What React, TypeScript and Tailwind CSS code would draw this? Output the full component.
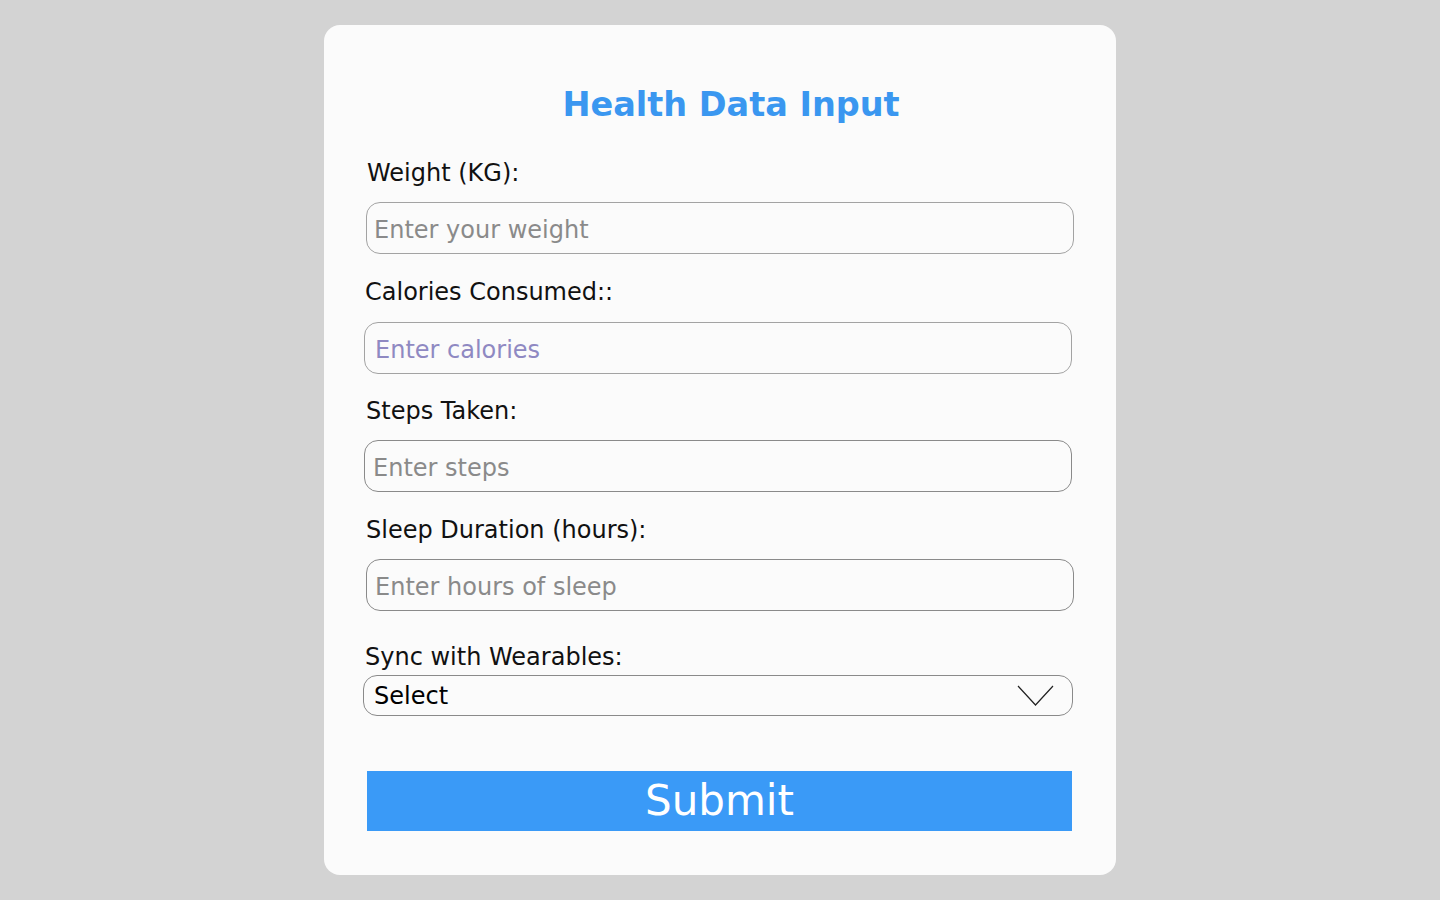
import { useState } from "react";

const font = { fontFamily: '"DejaVu Sans", "Open Sans", sans-serif' };

export default function App() {
  const [sync, setSync] = useState("");

  return (
    <div
      className="min-h-[900px] w-full bg-[#d3d3d3] flex justify-center pt-[25px]"
      style={font}
    >
      <div className="w-[792px] h-[850px] bg-[#fbfbfb] rounded-[16px] flex flex-col pt-[60px] pl-[40px] pr-[42px]">
        <h1 className="text-[33.5px] leading-[40px] font-bold text-[#3a97f0] text-center pl-[24px]">
          Health Data Input
        </h1>

        <label className="mt-[33px] ml-[3px] text-[24px] leading-[30px] text-[#111]">
          Weight (KG):
        </label>
        <input
          placeholder="Enter your weight"
          className="mt-[14px] ml-[2px] w-[708px] h-[52px] border border-[#a3a3a3] rounded-[14px] px-[7px] pt-[4px] text-[24px] bg-transparent outline-none placeholder:text-[#8a8a8a]"
        />

        <label className="mt-[23px] ml-[1px] text-[24px] leading-[30px] text-[#111]">
          Calories Consumed::
        </label>
        <input
          placeholder="Enter calories"
          className="mt-[15px] w-[708px] h-[52px] border border-[#a3a3a3] rounded-[14px] px-[10px] pt-[4px] text-[24px] bg-transparent outline-none placeholder:text-[#8f89c2]"
        />

        <label className="mt-[22px] ml-[2px] text-[24px] leading-[30px] text-[#111]">
          Steps Taken:
        </label>
        <input
          placeholder="Enter steps"
          className="mt-[14px] w-[708px] h-[52px] border border-[#8a8a8a] rounded-[14px] px-[8px] pt-[4px] text-[24px] bg-transparent outline-none placeholder:text-[#8a8a8a]"
        />

        <label className="mt-[23px] ml-[2px] text-[24px] leading-[30px] text-[#111]">
          Sleep Duration (hours):
        </label>
        <input
          placeholder="Enter hours of sleep"
          className="mt-[14px] ml-[2px] w-[708px] h-[52px] border border-[#8a8a8a] rounded-[14px] px-[8px] pt-[4px] text-[24px] bg-transparent outline-none placeholder:text-[#8a8a8a]"
        />

        <label className="mt-[31px] ml-[1px] text-[24px] leading-[30px] text-[#111]">
          Sync with Wearables:
        </label>
        <div className="mt-[3px] ml-[-1px] w-[710px] h-[41px] border border-[#8a8a8a] rounded-[14px] flex items-center justify-between pl-[10px] pr-[18px] relative">
          <span className="text-[24px] text-black">{sync || "Select"}</span>
          <svg width="37" height="21" viewBox="0 0 37 21" fill="none">
            <polyline points="1,1 18.5,20 36,1" stroke="#222" strokeWidth="1.2" />
          </svg>
          <select
            value={sync}
            onChange={(e) => setSync(e.target.value)}
            className="absolute inset-0 opacity-0 cursor-pointer"
          >
            <option value="">Select</option>
            <option value="Fitbit">Fitbit</option>
            <option value="Apple Watch">Apple Watch</option>
            <option value="Garmin">Garmin</option>
          </select>
        </div>

        <button className="mt-[55px] ml-[3px] w-[705px] h-[60px] bg-[#3a9af7] text-white text-[42px] leading-[60px]">
          Submit
        </button>
      </div>
    </div>
  );
}
